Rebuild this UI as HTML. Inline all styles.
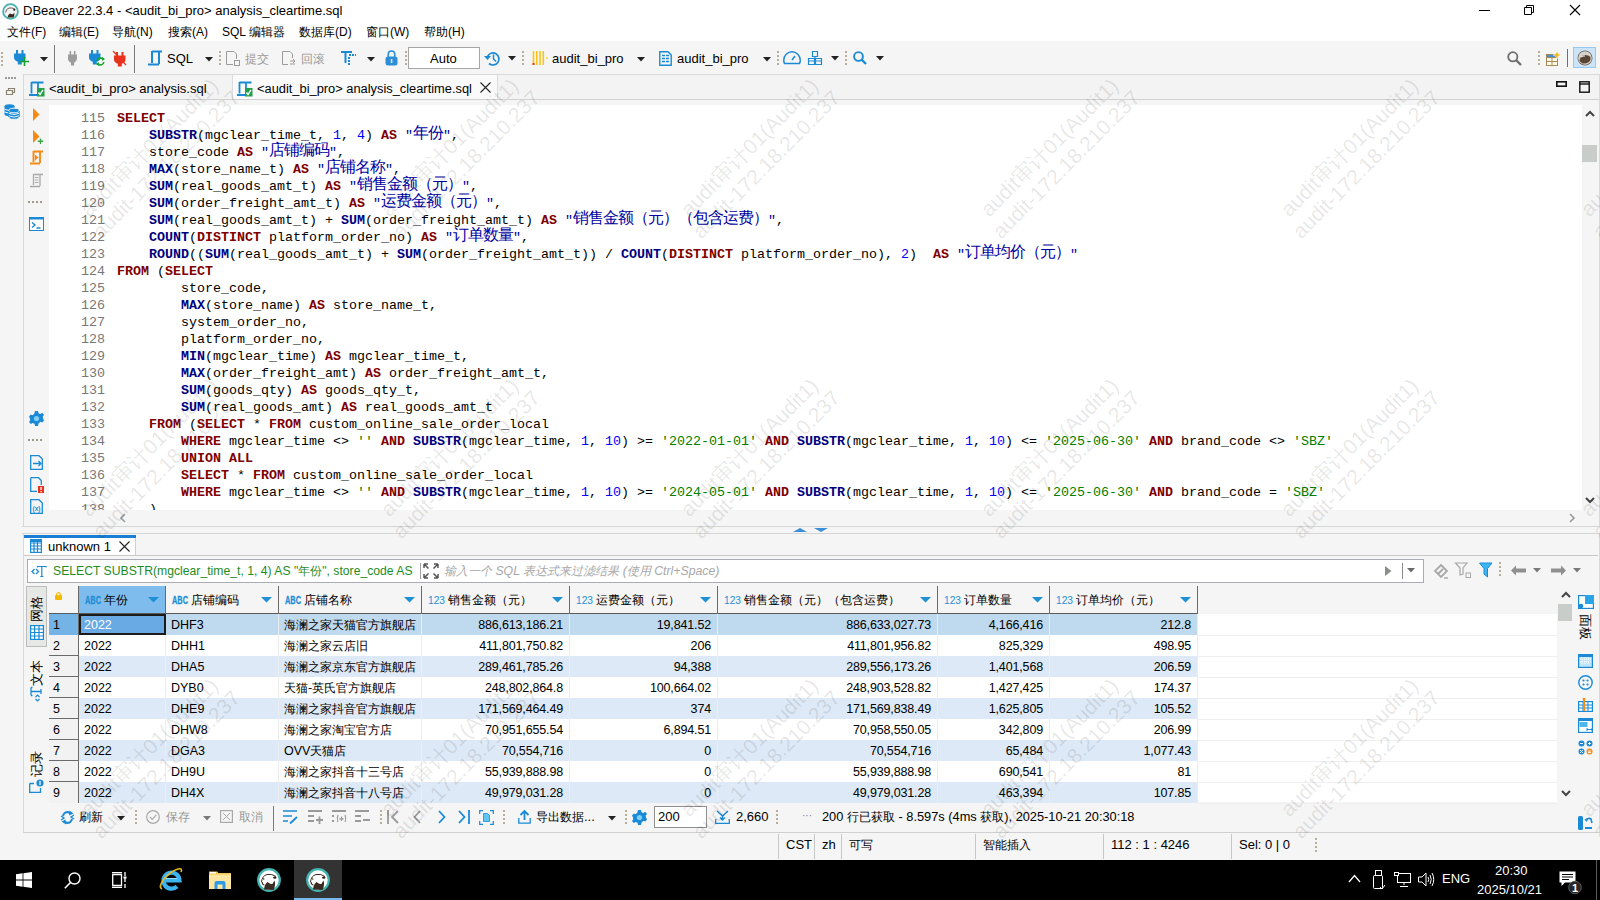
<!DOCTYPE html><html><head><meta charset="utf-8"><style>
*{box-sizing:border-box}
html,body{margin:0;padding:0;width:1600px;height:900px;overflow:hidden;background:#f5f5f5;font-family:"Liberation Sans",sans-serif;font-size:12px;color:#000}
.t{position:absolute;white-space:pre;line-height:16px}
.c{font-size:12px}
.code{position:absolute;left:49px;top:105px;width:1533px;height:405px;background:#fff;overflow:hidden}
.ln{position:absolute;left:0;width:56px;text-align:right;color:#787878;font:13.333px "Liberation Mono",monospace;line-height:17px}
.cl{position:absolute;left:68px;white-space:pre;font:13.333px "Liberation Mono",monospace;line-height:17px;color:#000}
.k{color:#800000;font-weight:bold}
.f{color:#000080;font-weight:bold}
.n{color:#0000ff}
.s{color:#008000}
.q{color:#0000a0}
.cj{font-family:"Liberation Sans",sans-serif;font-size:16px;letter-spacing:-1px;line-height:0;position:relative;top:-1px}
.wm{position:absolute;width:300px;height:48px;text-align:center;transform:rotate(-45deg);color:rgba(0,0,0,0.10);font-size:21px;line-height:24px;white-space:nowrap;pointer-events:none}
svg{position:absolute;overflow:visible}
</style></head><body>
<div style="position:absolute;left:0px;top:0px;width:1600px;height:41px;background:#fff"></div>
<div class="t" style="left:23px;top:3px;font-size:13px">DBeaver 22.3.4 - &lt;audit_bi_pro&gt; analysis_cleartime.sql</div>
<div class="t" style="left:7px;top:24px;font-size:12px"><span class="c">文件</span>(F)</div>
<div class="t" style="left:59px;top:24px;font-size:12px"><span class="c">编辑</span>(E)</div>
<div class="t" style="left:112px;top:24px;font-size:12px"><span class="c">导航</span>(N)</div>
<div class="t" style="left:168px;top:24px;font-size:12px"><span class="c">搜索</span>(A)</div>
<div class="t" style="left:222px;top:24px;font-size:12px">SQL <span class="c">编辑器</span></div>
<div class="t" style="left:299px;top:24px;font-size:12px"><span class="c">数据库</span>(D)</div>
<div class="t" style="left:366px;top:24px;font-size:12px"><span class="c">窗口</span>(W)</div>
<div class="t" style="left:424px;top:24px;font-size:12px"><span class="c">帮助</span>(H)</div>
<div style="position:absolute;left:0px;top:41px;width:1600px;height:33px;background:#f5f5f5"></div>
<svg style="left:2px;top:3px;" width="17" height="17" viewBox="0 0 17 17"><circle cx="8.5" cy="8.5" r="7.4" fill="#f4f4f4" stroke="#45b3b0" stroke-width="1.8"/><path d="M3.5 9.5Q4 6 7 5Q10 4.5 13 6" fill="none" stroke="#4a3a30" stroke-width="0.8"/><ellipse cx="12.3" cy="6.8" rx="1.2" ry="0.9" fill="#2a1d15"/><path d="M5.5 14.5Q6 11.5 8 10.5Q9.5 11.5 11 11.3Q12 10 12.3 9.5Q13 12 11.5 14.5Z" fill="#3b2a20"/></svg>
<svg style="left:1479px;top:10px;" width="11" height="1" viewBox="0 0 11 1"><rect width="11" height="1" fill="#000"/></svg>
<svg style="left:1524px;top:5px;" width="10" height="10" viewBox="0 0 10 10"><path d="M0.5 2.5H7.5V9.5H0.5Z M2.5 2.5V0.5H9.5V7.5H7.5" fill="none" stroke="#000" stroke-width="1"/></svg>
<svg style="left:1570px;top:5px;" width="10" height="10" viewBox="0 0 10 10"><path d="M0 0L10 10M10 0L0 10" stroke="#000" stroke-width="1.1"/></svg>
<div style="position:absolute;left:1px;top:52px;width:2px;height:2px;background:#b8ae98"></div><div style="position:absolute;left:1px;top:56px;width:2px;height:2px;background:#b8ae98"></div><div style="position:absolute;left:1px;top:60px;width:2px;height:2px;background:#b8ae98"></div><div style="position:absolute;left:1px;top:64px;width:2px;height:2px;background:#b8ae98"></div>
<svg style="left:14px;top:50px;" width="13" height="15" viewBox="0 0 13 15"><g transform="scale(1.0,1)"><path d="M2 0H4V3.5H7.5V0H9.5V3.5H11.5V7.5Q11.5 10.5 7.8 11.8V14.5H3.8V11.8Q0 10.5 0 7.5V3.5H2Z" fill="#1a8ad6"/></g></svg>
<svg style="left:20px;top:57px;" width="9" height="9" viewBox="0 0 9 9"><path d="M4.5 0V9M0 4.5H9" stroke="#11a52b" stroke-width="1.6"/></svg>
<svg style="left:40px;top:57px;" width="8" height="5" viewBox="0 0 8 5"><path d="M0 0H8L4 4.5Z" fill="#222"/></svg>
<div style="position:absolute;left:54px;top:45px;width:1px;height:28px;background:#7a7a7a"></div>
<svg style="left:68px;top:51px;" width="10" height="15" viewBox="0 0 10 15"><g transform="scale(0.78,1)"><path d="M2 0H4V3.5H7.5V0H9.5V3.5H11.5V7.5Q11.5 10.5 7.8 11.8V14.5H3.8V11.8Q0 10.5 0 7.5V3.5H2Z" fill="#9c9c9c"/></g></svg>
<svg style="left:89px;top:50px;" width="13" height="15" viewBox="0 0 13 15"><g transform="scale(1.0,1)"><path d="M2 0H4V3.5H7.5V0H9.5V3.5H11.5V7.5Q11.5 10.5 7.8 11.8V14.5H3.8V11.8Q0 10.5 0 7.5V3.5H2Z" fill="#1a8ad6"/></g></svg>
<svg style="left:96px;top:57px;" width="9" height="9" viewBox="0 0 9 9"><path d="M1 4Q2 1 5 1L8 2M8 5Q7 8 4 8L1 7" fill="none" stroke="#11a52b" stroke-width="1.4"/><path d="M6 0L9 2L6 4Z M3 5L0 7L3 9Z" fill="#11a52b"/></svg>
<svg style="left:114px;top:52px;" width="13" height="15" viewBox="0 0 13 15"><g transform="scale(1.0,1)"><path d="M2 0H4V3.5H7.5V0H9.5V3.5H11.5V7.5Q11.5 10.5 7.8 11.8V14.5H3.8V11.8Q0 10.5 0 7.5V3.5H2Z" fill="#e8321e"/></g></svg>
<svg style="left:113px;top:51px;" width="13" height="14" viewBox="0 0 13 14"><path d="M0 0L13 14" stroke="#e8321e" stroke-width="1.2"/></svg>
<div style="position:absolute;left:134px;top:45px;width:1px;height:28px;background:#7a7a7a"></div>
<svg style="left:147px;top:50px;" width="16" height="16" viewBox="0 0 16 16"><path d="M5 1.5H15 M5 1V13 M12 1.5V14 M1 14.5H12" stroke="#1a8ad6" stroke-width="2" fill="none"/></svg>
<div class="t" style="left:167px;top:51px;font-size:13px">SQL</div>
<svg style="left:205px;top:57px;" width="8" height="5" viewBox="0 0 8 5"><path d="M0 0H8L4 4.5Z" fill="#222"/></svg>
<div style="position:absolute;left:219px;top:51px;width:2px;height:2px;background:#b8ae98"></div><div style="position:absolute;left:219px;top:55px;width:2px;height:2px;background:#b8ae98"></div><div style="position:absolute;left:219px;top:59px;width:2px;height:2px;background:#b8ae98"></div><div style="position:absolute;left:219px;top:63px;width:2px;height:2px;background:#b8ae98"></div>
<svg style="left:226px;top:51px;" width="14" height="15" viewBox="0 0 14 15"><path d="M0.5 0.5H8L10.5 3V8 M0.5 0.5V13.5H7" fill="none" stroke="#9a9a9a" stroke-width="1"/><rect x="8.5" y="9.5" width="5" height="5" fill="none" stroke="#9a9a9a"/></svg>
<div class="t" style="left:245px;top:51px;font-size:12px;color:#9a9a9a"><span class="c">提交</span></div>
<svg style="left:282px;top:51px;" width="14" height="15" viewBox="0 0 14 15"><path d="M0.5 0.5H8L10.5 3V7 M0.5 0.5V13.5H6" fill="none" stroke="#9a9a9a" stroke-width="1"/><path d="M8 10H13M11 8L13 10L11 12M13 13H8" fill="none" stroke="#9a9a9a"/></svg>
<div class="t" style="left:301px;top:51px;font-size:12px;color:#9a9a9a"><span class="c">回滚</span></div>
<svg style="left:341px;top:51px;" width="16" height="16" viewBox="0 0 16 16"><path d="M0 1H11M4.5 1V12" stroke="#1a8ad6" stroke-width="2"/><path d="M8 4H10M11 4H13M14 4H15M8 6V8M8 9V11M8 12V14" stroke="#1a8ad6" stroke-width="2"/></svg>
<svg style="left:367px;top:57px;" width="8" height="5" viewBox="0 0 8 5"><path d="M0 0H8L4 4.5Z" fill="#222"/></svg>
<svg style="left:385px;top:50px;" width="13" height="16" viewBox="0 0 13 16"><path d="M3.2 7V4.5Q3.2 1 6.5 1Q9.8 1 9.8 4.5V7" fill="none" stroke="#2f8fd6" stroke-width="1.6"/><rect x="0.5" y="6.5" width="12" height="9" rx="2.5" fill="#2f8fd6"/><rect x="5.8" y="9" width="1.6" height="4" fill="#cfe6f7"/></svg>
<div style="position:absolute;left:405px;top:51px;width:2px;height:2px;background:#b8ae98"></div><div style="position:absolute;left:405px;top:55px;width:2px;height:2px;background:#b8ae98"></div><div style="position:absolute;left:405px;top:59px;width:2px;height:2px;background:#b8ae98"></div><div style="position:absolute;left:405px;top:63px;width:2px;height:2px;background:#b8ae98"></div>
<div style="position:absolute;left:408px;top:47px;width:72px;height:22px;background:#fff;border:1px solid #a6a6a6"></div>
<div class="t" style="left:430px;top:51px;font-size:13px">Auto</div>
<svg style="left:484px;top:50px;" width="17" height="17" viewBox="0 0 17 17"><path d="M3.5 6.5A6 6 0 1 1 5 13.5" fill="none" stroke="#1a8ad6" stroke-width="1.7"/><path d="M0 6H7L3.5 10Z" fill="#1a8ad6"/><path d="M9.5 4.5V9L12 11.5" fill="none" stroke="#1a8ad6" stroke-width="1.5"/></svg>
<svg style="left:508px;top:56px;" width="8" height="5" viewBox="0 0 8 5"><path d="M0 0H8L4 4.5Z" fill="#222"/></svg>
<div style="position:absolute;left:522px;top:51px;width:2px;height:2px;background:#b8ae98"></div><div style="position:absolute;left:522px;top:55px;width:2px;height:2px;background:#b8ae98"></div><div style="position:absolute;left:522px;top:59px;width:2px;height:2px;background:#b8ae98"></div><div style="position:absolute;left:522px;top:63px;width:2px;height:2px;background:#b8ae98"></div>
<svg style="left:532px;top:51px;" width="17" height="14" viewBox="0 0 17 14"><path d="M1.5 0V14M4.8 0V14M8 0V14M11.3 0V14" stroke="#fcc419" stroke-width="1.6"/><rect x="0.5" y="12" width="2" height="2" fill="#e8321e"/><circle cx="15" cy="7" r="1" fill="#fcdc19"/></svg>
<div class="t" style="left:552px;top:51px;font-size:13px">audit_bi_pro</div>
<svg style="left:637px;top:57px;" width="8" height="5" viewBox="0 0 8 5"><path d="M0 0H8L4 4.5Z" fill="#222"/></svg>
<svg style="left:659px;top:51px;" width="13" height="15" viewBox="0 0 13 15"><path d="M0.8 0.8H9L12.2 4V14.2H0.8Z" fill="none" stroke="#1a8ad6" stroke-width="1.4"/><path d="M3 4.5H6M7 4.5H10M3 7.5H6M7 7.5H10M3 10.5H6M7 10.5H10" stroke="#1a8ad6" stroke-width="1.3"/></svg>
<div class="t" style="left:677px;top:51px;font-size:13px">audit_bi_pro</div>
<svg style="left:763px;top:57px;" width="8" height="5" viewBox="0 0 8 5"><path d="M0 0H8L4 4.5Z" fill="#222"/></svg>
<div style="position:absolute;left:777px;top:51px;width:2px;height:2px;background:#b8ae98"></div><div style="position:absolute;left:777px;top:55px;width:2px;height:2px;background:#b8ae98"></div><div style="position:absolute;left:777px;top:59px;width:2px;height:2px;background:#b8ae98"></div><div style="position:absolute;left:777px;top:63px;width:2px;height:2px;background:#b8ae98"></div>
<svg style="left:783px;top:51px;" width="18" height="14" viewBox="0 0 18 14"><path d="M1.5 12.5Q0.5 11 0.8 9A8.2 8.2 0 0 1 17.2 9Q17.5 11 16.5 12.5Z" fill="none" stroke="#1a8ad6" stroke-width="1.5"/><path d="M9 9L12 5" stroke="#1a8ad6" stroke-width="1.6"/></svg>
<svg style="left:808px;top:51px;" width="14" height="14" viewBox="0 0 14 14"><path d="M4.5 0.5H9.5V5.5H4.5Z M0.5 7.5H6.5V13.5H0.5Z M7.5 7.5H13.5V13.5H7.5Z M7 5.5V7.5M0.5 10H13.5" fill="none" stroke="#1a8ad6" stroke-width="1.2"/></svg>
<svg style="left:831px;top:56px;" width="8" height="5" viewBox="0 0 8 5"><path d="M0 0H8L4 4.5Z" fill="#222"/></svg>
<div style="position:absolute;left:845px;top:51px;width:2px;height:2px;background:#b8ae98"></div><div style="position:absolute;left:845px;top:55px;width:2px;height:2px;background:#b8ae98"></div><div style="position:absolute;left:845px;top:59px;width:2px;height:2px;background:#b8ae98"></div><div style="position:absolute;left:845px;top:63px;width:2px;height:2px;background:#b8ae98"></div>
<svg style="left:853px;top:51px;" width="14" height="15" viewBox="0 0 14 15"><circle cx="5.5" cy="5.5" r="4.4" fill="none" stroke="#1a8ad6" stroke-width="1.9"/><path d="M8.5 8.5L13 13" stroke="#1a8ad6" stroke-width="2.4"/></svg>
<svg style="left:876px;top:56px;" width="8" height="5" viewBox="0 0 8 5"><path d="M0 0H8L4 4.5Z" fill="#222"/></svg>
<svg style="left:1507px;top:51px;" width="15" height="15" viewBox="0 0 15 15"><circle cx="5.8" cy="5.8" r="4.6" fill="none" stroke="#6e6e6e" stroke-width="1.8"/><path d="M9 9L14 14" stroke="#6e6e6e" stroke-width="2.4"/></svg>
<div style="position:absolute;left:1538px;top:51px;width:2px;height:2px;background:#b8ae98"></div><div style="position:absolute;left:1538px;top:55px;width:2px;height:2px;background:#b8ae98"></div><div style="position:absolute;left:1538px;top:59px;width:2px;height:2px;background:#b8ae98"></div><div style="position:absolute;left:1538px;top:63px;width:2px;height:2px;background:#b8ae98"></div>
<svg style="left:1546px;top:51px;" width="15" height="15" viewBox="0 0 15 15"><rect x="0.5" y="3.5" width="11" height="11" fill="#fffbe8" stroke="#a58a55"/><path d="M0.5 6.5H11.5M6 6.5V14.5M0.5 10.5H11.5" stroke="#a58a55"/><rect x="1" y="4" width="10" height="2" fill="#3d8fd8"/><path d="M11 0L12.2 2.8L15 4L12.2 5.2L11 8L9.8 5.2L7 4L9.8 2.8Z" fill="#f0b820" stroke="#fff" stroke-width="0.5"/></svg>
<div style="position:absolute;left:1567px;top:49px;width:1px;height:18px;background:#6f6f6f"></div>
<div style="position:absolute;left:1573px;top:47px;width:23px;height:21px;background:#cce4f7;border:1px solid #99c9ef"></div>
<svg style="left:1577px;top:50px;" width="16" height="16" viewBox="0 0 16 16"><circle cx="8" cy="8" r="7.5" fill="#6a5a50"/><circle cx="8" cy="8" r="6.8" fill="#d8d2cc"/><path d="M2.5 11Q3 6 7 5Q11 4.5 13.5 7Q14 10 12 12Q9 14 5.5 13.5Z" fill="#5a4436"/><path d="M4 7Q6 5.5 8 6" stroke="#fff" stroke-width="1" fill="none"/></svg>
<div style="position:absolute;left:23px;top:74px;width:1577px;height:26px;background:#f3f3f3;border:1px solid #d9d9d9;border-bottom:1px solid #d0d0d0"></div>
<div style="position:absolute;left:232px;top:75px;width:266px;height:24px;background:#fafafa;border-left:1px solid #dcdcdc;border-right:1px solid #dcdcdc"></div>
<div class="t" style="left:49px;top:81px;font-size:13px">&lt;audit_bi_pro&gt; analysis.sql</div>
<div class="t" style="left:257px;top:81px;font-size:12.85px">&lt;audit_bi_pro&gt; analysis_cleartime.sql</div>
<div style="position:absolute;left:23px;top:100px;width:1577px;height:426px;background:#f5f5f5;border-left:1px solid #d9d9d9;border-right:1px solid #d9d9d9"></div>
<div class="code">
<div class="ln" style="top:5px">115</div>
<div class="cl" style="top:5px"><span class="k">SELECT</span></div>
<div class="ln" style="top:22px">116</div>
<div class="cl" style="top:22px">    <span class="f">SUBSTR</span>(mgclear_time_t, <span class="n">1</span>, <span class="n">4</span>) <span class="k">AS</span> <span class="q">&quot;<span class="cj">年份</span>&quot;</span>,</div>
<div class="ln" style="top:39px">117</div>
<div class="cl" style="top:39px">    store_code <span class="k">AS</span> <span class="q">&quot;<span class="cj">店铺编码</span>&quot;</span>,</div>
<div class="ln" style="top:56px">118</div>
<div class="cl" style="top:56px">    <span class="f">MAX</span>(store_name_t) <span class="k">AS</span> <span class="q">&quot;<span class="cj">店铺名称</span>&quot;</span>,</div>
<div class="ln" style="top:73px">119</div>
<div class="cl" style="top:73px">    <span class="f">SUM</span>(real_goods_amt_t) <span class="k">AS</span> <span class="q">&quot;<span class="cj">销售金额（元）</span>&quot;</span>,</div>
<div class="ln" style="top:90px">120</div>
<div class="cl" style="top:90px">    <span class="f">SUM</span>(order_freight_amt_t) <span class="k">AS</span> <span class="q">&quot;<span class="cj">运费金额（元）</span>&quot;</span>,</div>
<div class="ln" style="top:107px">121</div>
<div class="cl" style="top:107px">    <span class="f">SUM</span>(real_goods_amt_t) + <span class="f">SUM</span>(order_freight_amt_t) <span class="k">AS</span> <span class="q">&quot;<span class="cj">销售金额（元）（包含运费）</span>&quot;</span>,</div>
<div class="ln" style="top:124px">122</div>
<div class="cl" style="top:124px">    <span class="f">COUNT</span>(<span class="k">DISTINCT</span> platform_order_no) <span class="k">AS</span> <span class="q">&quot;<span class="cj">订单数量</span>&quot;</span>,</div>
<div class="ln" style="top:141px">123</div>
<div class="cl" style="top:141px">    <span class="f">ROUND</span>((<span class="f">SUM</span>(real_goods_amt_t) + <span class="f">SUM</span>(order_freight_amt_t)) / <span class="f">COUNT</span>(<span class="k">DISTINCT</span> platform_order_no), <span class="n">2</span>)  <span class="k">AS</span> <span class="q">&quot;<span class="cj">订单均价（元）</span>&quot;</span></div>
<div class="ln" style="top:158px">124</div>
<div class="cl" style="top:158px"><span class="k">FROM</span> (<span class="k">SELECT</span></div>
<div class="ln" style="top:175px">125</div>
<div class="cl" style="top:175px">        store_code,</div>
<div class="ln" style="top:192px">126</div>
<div class="cl" style="top:192px">        <span class="f">MAX</span>(store_name) <span class="k">AS</span> store_name_t,</div>
<div class="ln" style="top:209px">127</div>
<div class="cl" style="top:209px">        system_order_no,</div>
<div class="ln" style="top:226px">128</div>
<div class="cl" style="top:226px">        platform_order_no,</div>
<div class="ln" style="top:243px">129</div>
<div class="cl" style="top:243px">        <span class="f">MIN</span>(mgclear_time) <span class="k">AS</span> mgclear_time_t,</div>
<div class="ln" style="top:260px">130</div>
<div class="cl" style="top:260px">        <span class="f">MAX</span>(order_freight_amt) <span class="k">AS</span> order_freight_amt_t,</div>
<div class="ln" style="top:277px">131</div>
<div class="cl" style="top:277px">        <span class="f">SUM</span>(goods_qty) <span class="k">AS</span> goods_qty_t,</div>
<div class="ln" style="top:294px">132</div>
<div class="cl" style="top:294px">        <span class="f">SUM</span>(real_goods_amt) <span class="k">AS</span> real_goods_amt_t</div>
<div class="ln" style="top:311px">133</div>
<div class="cl" style="top:311px">    <span class="k">FROM</span> (<span class="k">SELECT</span> * <span class="k">FROM</span> custom_online_sale_order_local</div>
<div class="ln" style="top:328px">134</div>
<div class="cl" style="top:328px">        <span class="k">WHERE</span> mgclear_time &lt;&gt; <span class="s">&#x27;&#x27;</span> <span class="k">AND</span> <span class="f">SUBSTR</span>(mgclear_time, <span class="n">1</span>, <span class="n">10</span>) &gt;= <span class="s">&#x27;2022-01-01&#x27;</span> <span class="k">AND</span> <span class="f">SUBSTR</span>(mgclear_time, <span class="n">1</span>, <span class="n">10</span>) &lt;= <span class="s">&#x27;2025-06-30&#x27;</span> <span class="k">AND</span> brand_code &lt;&gt; <span class="s">&#x27;SBZ&#x27;</span></div>
<div class="ln" style="top:345px">135</div>
<div class="cl" style="top:345px">        <span class="k">UNION</span> <span class="k">ALL</span></div>
<div class="ln" style="top:362px">136</div>
<div class="cl" style="top:362px">        <span class="k">SELECT</span> * <span class="k">FROM</span> custom_online_sale_order_local</div>
<div class="ln" style="top:379px">137</div>
<div class="cl" style="top:379px">        <span class="k">WHERE</span> mgclear_time &lt;&gt; <span class="s">&#x27;&#x27;</span> <span class="k">AND</span> <span class="f">SUBSTR</span>(mgclear_time, <span class="n">1</span>, <span class="n">10</span>) &gt;= <span class="s">&#x27;2024-05-01&#x27;</span> <span class="k">AND</span> <span class="f">SUBSTR</span>(mgclear_time, <span class="n">1</span>, <span class="n">10</span>) &lt;= <span class="s">&#x27;2025-06-30&#x27;</span> <span class="k">AND</span> brand_code = <span class="s">&#x27;SBZ&#x27;</span></div>
<div class="ln" style="top:396px">138</div>
<div class="cl" style="top:396px">    )</div>
</div>
<div style="position:absolute;left:49px;top:510px;width:1533px;height:16px;background:#f5f5f5"></div>
<svg style="left:120px;top:513px;" width="6" height="10" viewBox="0 0 6 10"><path d="M5 1L1 5L5 9" fill="none" stroke="#9a9a9a" stroke-width="1.6"/></svg>
<svg style="left:1569px;top:513px;" width="6" height="10" viewBox="0 0 6 10"><path d="M1 1L5 5L1 9" fill="none" stroke="#9a9a9a" stroke-width="1.6"/></svg>
<div style="position:absolute;left:1582px;top:105px;width:16px;height:405px;background:#f5f5f5"></div>
<div style="position:absolute;left:1582px;top:145px;width:15px;height:17px;background:#c9cdc9"></div>
<div style="position:absolute;left:22px;top:526px;width:1578px;height:1px;background:#d5d5d5"></div>
<div style="position:absolute;left:22px;top:533px;width:1578px;height:1px;background:#d5d5d5"></div>
<div style="position:absolute;left:5px;top:77px;width:2px;height:2px;background:#9a9a9a"></div><div style="position:absolute;left:8px;top:77px;width:2px;height:2px;background:#9a9a9a"></div><div style="position:absolute;left:11px;top:77px;width:2px;height:2px;background:#9a9a9a"></div><div style="position:absolute;left:14px;top:77px;width:2px;height:2px;background:#9a9a9a"></div>
<svg style="left:6px;top:86px;" width="10" height="9" viewBox="0 0 10 9"><path d="M0.5 4.5H6.5V8.5H0.5Z M2.5 4.5V2.5H8.5V6.5H6.5" fill="none" stroke="#8a8170" stroke-width="1.2"/></svg>
<svg style="left:4px;top:104px;" width="16" height="16" viewBox="0 0 16 16"><g fill="#1a8ad6"><ellipse cx="5.5" cy="2.5" rx="5" ry="2.2"/><rect x="0.5" y="2.5" width="10" height="7.5"/><ellipse cx="5.5" cy="10" rx="5" ry="2.2"/></g><path d="M0.5 5.3Q5.5 7.8 10.5 5.3M0.5 8Q5.5 10.5 10.5 8" stroke="#fff" stroke-width="0.9" fill="none"/><g fill="#1a8ad6" stroke="#f5f5f5" stroke-width="1"><ellipse cx="10" cy="13" rx="5.2" ry="2.3"/><rect x="4.8" y="6.5" width="10.4" height="6.5" stroke="none"/><ellipse cx="10" cy="6.5" rx="5.2" ry="2.3"/></g><path d="M4.8 7V13M15.2 7V13" stroke="#1a8ad6" stroke-width="1"/><path d="M4.8 9.3Q10 11.8 15.2 9.3M4.8 11.8Q10 14.3 15.2 11.8" stroke="#fff" stroke-width="0.9" fill="none"/></svg>
<svg style="left:29px;top:81px;" width="16" height="16" viewBox="0 0 16 16"><path d="M2.5 1.5H14.5 M2.5 1V12.5 M9 1.5V9 M0 14H9" stroke="#1a8ad6" stroke-width="1.8" fill="none"/><rect x="8" y="7" width="7.5" height="8.5" fill="#21a04a"/><path d="M9.5 11.5L11 13.5L14 8.8" fill="none" stroke="#fff" stroke-width="1.3"/></svg>
<svg style="left:237px;top:81px;" width="16" height="16" viewBox="0 0 16 16"><path d="M2.5 1.5H14.5 M2.5 1V12.5 M9 1.5V9 M0 14H9" stroke="#1a8ad6" stroke-width="1.8" fill="none"/><rect x="8" y="7" width="7.5" height="8.5" fill="#21a04a"/><path d="M9.5 11.5L11 13.5L14 8.8" fill="none" stroke="#fff" stroke-width="1.3"/></svg>
<svg style="left:480px;top:82px;" width="11" height="11" viewBox="0 0 11 11"><path d="M0.5 0.5L10.5 10.5M10.5 0.5L0.5 10.5" stroke="#222" stroke-width="1.1"/></svg>
<svg style="left:1556px;top:81px;" width="11" height="6" viewBox="0 0 11 6"><rect x="0.8" y="0.8" width="9.4" height="4.4" fill="none" stroke="#111" stroke-width="1.6"/></svg>
<svg style="left:1579px;top:81px;" width="11" height="12" viewBox="0 0 11 12"><rect x="0.8" y="0.8" width="9.4" height="10.4" fill="none" stroke="#111" stroke-width="1.4"/><path d="M0.8 3H10.2" stroke="#111" stroke-width="1.4"/></svg>
<svg style="left:33px;top:108px;" width="7" height="13" viewBox="0 0 7 13"><path d="M0 0L6.5 6.5L0 13Z" fill="#f68a12"/></svg>
<svg style="left:33px;top:130px;" width="11" height="14" viewBox="0 0 11 14"><path d="M0 0L6.5 6.5L0 13Z" fill="#f68a12"/><path d="M7.5 8.5V14M4.8 11.3H10.2" stroke="#3aa64a" stroke-width="1.4"/></svg>
<svg style="left:29px;top:150px;" width="15" height="16" viewBox="0 0 15 16"><path d="M4.5 1.5H14 M4.5 1V12 M11 1.5V13 M1 13.5H11" stroke="#f68a12" stroke-width="1.9" fill="none"/><path d="M6 4.5L9.5 7.5L6 10.5Z" fill="#f68a12"/></svg>
<svg style="left:29px;top:173px;" width="15" height="15" viewBox="0 0 15 15"><path d="M4.5 1.5H14 M4.5 1V12 M11 1.5V13 M1 13.5H11" stroke="#a8a8a8" stroke-width="1.3" fill="none"/><path d="M6 4.5H9.5M6 7H9.5M6 9.5H9.5" stroke="#a8a8a8" stroke-width="1"/></svg>
<div style="position:absolute;left:28px;top:201px;width:2px;height:2px;background:#a09a88"></div><div style="position:absolute;left:32px;top:201px;width:2px;height:2px;background:#a09a88"></div><div style="position:absolute;left:36px;top:201px;width:2px;height:2px;background:#a09a88"></div><div style="position:absolute;left:40px;top:201px;width:2px;height:2px;background:#a09a88"></div>
<svg style="left:29px;top:217px;" width="15" height="14" viewBox="0 0 15 14"><rect x="0.5" y="0.5" width="14" height="13" fill="#fff" stroke="#1a8ad6"/><rect x="0" y="0" width="15" height="2.5" fill="#1a8ad6"/><path d="M3 5.5L6 8L3 10.5M7.5 11H11.5" fill="none" stroke="#1a8ad6" stroke-width="1.4"/></svg>
<svg style="left:29px;top:411px;" width="15" height="15" viewBox="0 0 15 15"><path d="M6 0H9L9.5 2.2L11.3 3L13.2 1.8L15 4L13.7 5.8L14 7.5L15 9.5L13.3 11.5L11.4 10.8L9.6 12.6L9 15H6L5.6 12.8L3.7 11.9L1.8 13L0 11L1.2 9.2L1 7.5L0 5.5L1.8 3.5L3.6 4.2L5.4 2.4Z" fill="#1a8ad6"/><circle cx="7.5" cy="7.5" r="2.6" fill="#7fd0f4"/></svg>
<div style="position:absolute;left:28px;top:439px;width:2px;height:2px;background:#a09a88"></div><div style="position:absolute;left:32px;top:439px;width:2px;height:2px;background:#a09a88"></div><div style="position:absolute;left:36px;top:439px;width:2px;height:2px;background:#a09a88"></div><div style="position:absolute;left:40px;top:439px;width:2px;height:2px;background:#a09a88"></div>
<svg style="left:30px;top:455px;" width="13" height="15" viewBox="0 0 13 15"><path d="M0.7 0.7H9L12.3 4V14.3H0.7Z" fill="none" stroke="#1a8ad6" stroke-width="1.3"/><path d="M3 8.5H11M8.5 6L11 8.5L8.5 11" fill="none" stroke="#1a8ad6" stroke-width="1.3"/></svg>
<svg style="left:30px;top:477px;" width="14" height="16" viewBox="0 0 14 16"><path d="M0.7 0.7H8.5L11.3 3.5V8 M0.7 0.7V14.3H7" fill="none" stroke="#1a8ad6" stroke-width="1.3"/><rect x="8" y="9" width="6" height="7" fill="#e8321e"/><rect x="10.4" y="10" width="1.3" height="3" fill="#fff"/><rect x="10.4" y="14" width="1.3" height="1.2" fill="#fff"/></svg>
<svg style="left:30px;top:499px;" width="13" height="15" viewBox="0 0 13 15"><path d="M0.7 0.7H9L12.3 4V14.3H0.7Z" fill="none" stroke="#1a8ad6" stroke-width="1.3"/><text x="6.5" y="11.5" font-size="6.5" text-anchor="middle" fill="#1a8ad6" font-family="Liberation Sans" font-weight="bold">(x)</text></svg>
<svg style="left:1585px;top:111px;" width="10" height="6" viewBox="0 0 10 6"><path d="M1 5L5 1L9 5" fill="none" stroke="#444" stroke-width="2"/></svg>
<svg style="left:1585px;top:497px;" width="10" height="6" viewBox="0 0 10 6"><path d="M1 1L5 5L9 1" fill="none" stroke="#444" stroke-width="2"/></svg>
<svg style="left:793px;top:528px;" width="14" height="4" viewBox="0 0 14 4"><path d="M0 4L7 0L14 4Z" fill="#3b8fd6"/></svg>
<svg style="left:814px;top:528px;" width="14" height="4" viewBox="0 0 14 4"><path d="M0 0H14L7 4Z" fill="#3b8fd6"/></svg>
<div style="position:absolute;left:23px;top:534px;width:1577px;height:299px;background:#f5f5f5;border-left:1px solid #d9d9d9;border-right:1px solid #d9d9d9;border-bottom:1px solid #d0d0d0"></div>
<div style="position:absolute;left:24px;top:555px;width:1574px;height:1px;background:#c8c8c8"></div>
<div style="position:absolute;left:24px;top:535px;width:112px;height:20px;background:#fff;border-right:1px solid #d0d0d0"></div>
<div style="position:absolute;left:24px;top:535px;width:112px;height:3px;background:#1a7dd4"></div>
<div class="t" style="left:48px;top:539px;font-size:13px">unknown 1</div>
<div style="position:absolute;left:27px;top:559px;width:1397px;height:24px;background:#fff;border:1px solid #a9adb1"></div>
<div class="t" style="left:53px;top:563px;font-size:12.2px;color:#1e8c1e">SELECT SUBSTR(mgclear_time_t, 1, 4) AS &quot;<span class="c">年份</span>&quot;, store_code AS</div>
<div style="position:absolute;left:420px;top:563px;width:1px;height:16px;background:#a0a0a0"></div>
<div class="t" style="left:444px;top:563px;font-size:12.3px;color:#a8a8a8;font-style:italic"><span class="c">输入一个</span> SQL <span class="c">表达式来过滤结果</span> (<span class="c">使用</span> Ctrl+Space)</div>
<div style="position:absolute;left:49px;top:586px;width:1508px;height:216px;background:#fff"></div>
<div style="position:absolute;left:1198px;top:586px;width:359px;height:28px;background:#f5f5f5"></div>
<div style="position:absolute;left:49px;top:586px;width:1149px;height:28px;background:#f5f5f5;border-bottom:1px solid #5a5a5a"></div>
<div style="position:absolute;left:79px;top:586px;width:87px;height:28px;background:#7ebcee;border-bottom:1px solid #5a5a5a"></div>
<div style="position:absolute;left:78px;top:586px;width:1px;height:28px;background:#6a6a6a"></div>
<svg style="left:85px;top:596px;" width="16" height="8" viewBox="0 0 16 8"><text x="0" y="7.5" font-size="10.5" font-weight="bold" fill="#1f8fd6" font-family="Liberation Sans" textLength="16" lengthAdjust="spacingAndGlyphs" stroke="#1f8fd6" stroke-width="0.3">ABC</text></svg>
<div class="t" style="left:104px;top:592px;font-size:12px"><span class="c">年份</span></div>
<svg style="left:148px;top:597px;" width="11" height="6" viewBox="0 0 11 6"><path d="M0 0H11L5.5 5.5Z" fill="#1f8fd6"/></svg>
<div style="position:absolute;left:165px;top:586px;width:1px;height:28px;background:#6a6a6a"></div>
<svg style="left:172px;top:596px;" width="16" height="8" viewBox="0 0 16 8"><text x="0" y="7.5" font-size="10.5" font-weight="bold" fill="#1f8fd6" font-family="Liberation Sans" textLength="16" lengthAdjust="spacingAndGlyphs" stroke="#1f8fd6" stroke-width="0.3">ABC</text></svg>
<div class="t" style="left:191px;top:592px;font-size:12px"><span class="c">店铺编码</span></div>
<svg style="left:261px;top:597px;" width="11" height="6" viewBox="0 0 11 6"><path d="M0 0H11L5.5 5.5Z" fill="#1f8fd6"/></svg>
<div style="position:absolute;left:278px;top:586px;width:1px;height:28px;background:#6a6a6a"></div>
<svg style="left:285px;top:596px;" width="16" height="8" viewBox="0 0 16 8"><text x="0" y="7.5" font-size="10.5" font-weight="bold" fill="#1f8fd6" font-family="Liberation Sans" textLength="16" lengthAdjust="spacingAndGlyphs" stroke="#1f8fd6" stroke-width="0.3">ABC</text></svg>
<div class="t" style="left:304px;top:592px;font-size:12px"><span class="c">店铺名称</span></div>
<svg style="left:404px;top:597px;" width="11" height="6" viewBox="0 0 11 6"><path d="M0 0H11L5.5 5.5Z" fill="#1f8fd6"/></svg>
<div style="position:absolute;left:421px;top:586px;width:1px;height:28px;background:#6a6a6a"></div>
<svg style="left:428px;top:595px;" width="17" height="9" viewBox="0 0 17 9"><text x="0" y="8.5" font-size="11" fill="#1f8fd6" font-family="Liberation Sans" textLength="17" lengthAdjust="spacingAndGlyphs">123</text></svg>
<div class="t" style="left:448px;top:592px;font-size:12px"><span class="c">销售金额（元）</span></div>
<svg style="left:552px;top:597px;" width="11" height="6" viewBox="0 0 11 6"><path d="M0 0H11L5.5 5.5Z" fill="#1f8fd6"/></svg>
<div style="position:absolute;left:569px;top:586px;width:1px;height:28px;background:#6a6a6a"></div>
<svg style="left:576px;top:595px;" width="17" height="9" viewBox="0 0 17 9"><text x="0" y="8.5" font-size="11" fill="#1f8fd6" font-family="Liberation Sans" textLength="17" lengthAdjust="spacingAndGlyphs">123</text></svg>
<div class="t" style="left:596px;top:592px;font-size:12px"><span class="c">运费金额（元）</span></div>
<svg style="left:700px;top:597px;" width="11" height="6" viewBox="0 0 11 6"><path d="M0 0H11L5.5 5.5Z" fill="#1f8fd6"/></svg>
<div style="position:absolute;left:717px;top:586px;width:1px;height:28px;background:#6a6a6a"></div>
<svg style="left:724px;top:595px;" width="17" height="9" viewBox="0 0 17 9"><text x="0" y="8.5" font-size="11" fill="#1f8fd6" font-family="Liberation Sans" textLength="17" lengthAdjust="spacingAndGlyphs">123</text></svg>
<div class="t" style="left:744px;top:592px;font-size:12px"><span class="c">销售金额（元）（包含运费）</span></div>
<svg style="left:920px;top:597px;" width="11" height="6" viewBox="0 0 11 6"><path d="M0 0H11L5.5 5.5Z" fill="#1f8fd6"/></svg>
<div style="position:absolute;left:937px;top:586px;width:1px;height:28px;background:#6a6a6a"></div>
<svg style="left:944px;top:595px;" width="17" height="9" viewBox="0 0 17 9"><text x="0" y="8.5" font-size="11" fill="#1f8fd6" font-family="Liberation Sans" textLength="17" lengthAdjust="spacingAndGlyphs">123</text></svg>
<div class="t" style="left:964px;top:592px;font-size:12px"><span class="c">订单数量</span></div>
<svg style="left:1032px;top:597px;" width="11" height="6" viewBox="0 0 11 6"><path d="M0 0H11L5.5 5.5Z" fill="#1f8fd6"/></svg>
<div style="position:absolute;left:1049px;top:586px;width:1px;height:28px;background:#6a6a6a"></div>
<svg style="left:1056px;top:595px;" width="17" height="9" viewBox="0 0 17 9"><text x="0" y="8.5" font-size="11" fill="#1f8fd6" font-family="Liberation Sans" textLength="17" lengthAdjust="spacingAndGlyphs">123</text></svg>
<div class="t" style="left:1076px;top:592px;font-size:12px"><span class="c">订单均价（元）</span></div>
<svg style="left:1180px;top:597px;" width="11" height="6" viewBox="0 0 11 6"><path d="M0 0H11L5.5 5.5Z" fill="#1f8fd6"/></svg>
<div style="position:absolute;left:1197px;top:586px;width:1px;height:28px;background:#6a6a6a"></div>
<div style="position:absolute;left:79px;top:614px;width:1119px;height:21px;background:#bfd9ef"></div>
<div style="position:absolute;left:49px;top:614px;width:29px;height:21px;background:#73b3e6"></div>
<div style="position:absolute;left:78px;top:614px;width:1px;height:21px;background:#6a6a6a"></div>
<div style="position:absolute;left:1198px;top:635px;width:359px;height:1px;background:#efefef"></div>
<div class="t" style="left:53px;top:617px;font-size:12.5px">1</div>
<div class="t" style="left:84px;top:617px;font-size:12.5px;color:#fff">2022</div>
<div style="position:absolute;left:165px;top:614px;width:1px;height:21px;background:#e9eef3"></div>
<div class="t" style="left:171px;top:617px;font-size:12.5px;color:#000">DHF3</div>
<div style="position:absolute;left:278px;top:614px;width:1px;height:21px;background:#e9eef3"></div>
<div class="t" style="left:284px;top:617px;font-size:12.5px;color:#000"><span class="c">海澜之家天猫官方旗舰店</span></div>
<div style="position:absolute;left:421px;top:614px;width:1px;height:21px;background:#e9eef3"></div>
<div class="t" style="left:422px;top:617px;width:141px;text-align:right;font-size:12.5px;letter-spacing:-0.15px">886,613,186.21</div>
<div style="position:absolute;left:569px;top:614px;width:1px;height:21px;background:#e9eef3"></div>
<div class="t" style="left:570px;top:617px;width:141px;text-align:right;font-size:12.5px;letter-spacing:-0.15px">19,841.52</div>
<div style="position:absolute;left:717px;top:614px;width:1px;height:21px;background:#e9eef3"></div>
<div class="t" style="left:718px;top:617px;width:213px;text-align:right;font-size:12.5px;letter-spacing:-0.15px">886,633,027.73</div>
<div style="position:absolute;left:937px;top:614px;width:1px;height:21px;background:#e9eef3"></div>
<div class="t" style="left:938px;top:617px;width:105px;text-align:right;font-size:12.5px;letter-spacing:-0.15px">4,166,416</div>
<div style="position:absolute;left:1049px;top:614px;width:1px;height:21px;background:#e9eef3"></div>
<div class="t" style="left:1050px;top:617px;width:141px;text-align:right;font-size:12.5px;letter-spacing:-0.15px">212.8</div>
<div style="position:absolute;left:79px;top:635px;width:1119px;height:21px;background:#fff"></div>
<div style="position:absolute;left:49px;top:635px;width:29px;height:21px;background:#f2f2f2"></div>
<div style="position:absolute;left:49px;top:655px;width:29px;height:1px;background:#6a6a6a"></div>
<div style="position:absolute;left:78px;top:635px;width:1px;height:21px;background:#6a6a6a"></div>
<div style="position:absolute;left:1198px;top:656px;width:359px;height:1px;background:#efefef"></div>
<div class="t" style="left:53px;top:638px;font-size:12.5px">2</div>
<div class="t" style="left:84px;top:638px;font-size:12.5px;color:#000">2022</div>
<div style="position:absolute;left:165px;top:635px;width:1px;height:21px;background:#ececec"></div>
<div class="t" style="left:171px;top:638px;font-size:12.5px;color:#000">DHH1</div>
<div style="position:absolute;left:278px;top:635px;width:1px;height:21px;background:#ececec"></div>
<div class="t" style="left:284px;top:638px;font-size:12.5px;color:#000"><span class="c">海澜之家云店旧</span></div>
<div style="position:absolute;left:421px;top:635px;width:1px;height:21px;background:#ececec"></div>
<div class="t" style="left:422px;top:638px;width:141px;text-align:right;font-size:12.5px;letter-spacing:-0.15px">411,801,750.82</div>
<div style="position:absolute;left:569px;top:635px;width:1px;height:21px;background:#ececec"></div>
<div class="t" style="left:570px;top:638px;width:141px;text-align:right;font-size:12.5px;letter-spacing:-0.15px">206</div>
<div style="position:absolute;left:717px;top:635px;width:1px;height:21px;background:#ececec"></div>
<div class="t" style="left:718px;top:638px;width:213px;text-align:right;font-size:12.5px;letter-spacing:-0.15px">411,801,956.82</div>
<div style="position:absolute;left:937px;top:635px;width:1px;height:21px;background:#ececec"></div>
<div class="t" style="left:938px;top:638px;width:105px;text-align:right;font-size:12.5px;letter-spacing:-0.15px">825,329</div>
<div style="position:absolute;left:1049px;top:635px;width:1px;height:21px;background:#ececec"></div>
<div class="t" style="left:1050px;top:638px;width:141px;text-align:right;font-size:12.5px;letter-spacing:-0.15px">498.95</div>
<div style="position:absolute;left:79px;top:656px;width:1119px;height:21px;background:#dde9f6"></div>
<div style="position:absolute;left:49px;top:656px;width:29px;height:21px;background:#f2f2f2"></div>
<div style="position:absolute;left:49px;top:676px;width:29px;height:1px;background:#6a6a6a"></div>
<div style="position:absolute;left:78px;top:656px;width:1px;height:21px;background:#6a6a6a"></div>
<div style="position:absolute;left:1198px;top:677px;width:359px;height:1px;background:#efefef"></div>
<div class="t" style="left:53px;top:659px;font-size:12.5px">3</div>
<div class="t" style="left:84px;top:659px;font-size:12.5px;color:#000">2022</div>
<div style="position:absolute;left:165px;top:656px;width:1px;height:21px;background:#e9eef3"></div>
<div class="t" style="left:171px;top:659px;font-size:12.5px;color:#000">DHA5</div>
<div style="position:absolute;left:278px;top:656px;width:1px;height:21px;background:#e9eef3"></div>
<div class="t" style="left:284px;top:659px;font-size:12.5px;color:#000"><span class="c">海澜之家京东官方旗舰店</span></div>
<div style="position:absolute;left:421px;top:656px;width:1px;height:21px;background:#e9eef3"></div>
<div class="t" style="left:422px;top:659px;width:141px;text-align:right;font-size:12.5px;letter-spacing:-0.15px">289,461,785.26</div>
<div style="position:absolute;left:569px;top:656px;width:1px;height:21px;background:#e9eef3"></div>
<div class="t" style="left:570px;top:659px;width:141px;text-align:right;font-size:12.5px;letter-spacing:-0.15px">94,388</div>
<div style="position:absolute;left:717px;top:656px;width:1px;height:21px;background:#e9eef3"></div>
<div class="t" style="left:718px;top:659px;width:213px;text-align:right;font-size:12.5px;letter-spacing:-0.15px">289,556,173.26</div>
<div style="position:absolute;left:937px;top:656px;width:1px;height:21px;background:#e9eef3"></div>
<div class="t" style="left:938px;top:659px;width:105px;text-align:right;font-size:12.5px;letter-spacing:-0.15px">1,401,568</div>
<div style="position:absolute;left:1049px;top:656px;width:1px;height:21px;background:#e9eef3"></div>
<div class="t" style="left:1050px;top:659px;width:141px;text-align:right;font-size:12.5px;letter-spacing:-0.15px">206.59</div>
<div style="position:absolute;left:79px;top:677px;width:1119px;height:21px;background:#fff"></div>
<div style="position:absolute;left:49px;top:677px;width:29px;height:21px;background:#f2f2f2"></div>
<div style="position:absolute;left:49px;top:697px;width:29px;height:1px;background:#6a6a6a"></div>
<div style="position:absolute;left:78px;top:677px;width:1px;height:21px;background:#6a6a6a"></div>
<div style="position:absolute;left:1198px;top:698px;width:359px;height:1px;background:#efefef"></div>
<div class="t" style="left:53px;top:680px;font-size:12.5px">4</div>
<div class="t" style="left:84px;top:680px;font-size:12.5px;color:#000">2022</div>
<div style="position:absolute;left:165px;top:677px;width:1px;height:21px;background:#ececec"></div>
<div class="t" style="left:171px;top:680px;font-size:12.5px;color:#000">DYB0</div>
<div style="position:absolute;left:278px;top:677px;width:1px;height:21px;background:#ececec"></div>
<div class="t" style="left:284px;top:680px;font-size:12.5px;color:#000"><span class="c">天猫</span>-<span class="c">英氏官方旗舰店</span></div>
<div style="position:absolute;left:421px;top:677px;width:1px;height:21px;background:#ececec"></div>
<div class="t" style="left:422px;top:680px;width:141px;text-align:right;font-size:12.5px;letter-spacing:-0.15px">248,802,864.8</div>
<div style="position:absolute;left:569px;top:677px;width:1px;height:21px;background:#ececec"></div>
<div class="t" style="left:570px;top:680px;width:141px;text-align:right;font-size:12.5px;letter-spacing:-0.15px">100,664.02</div>
<div style="position:absolute;left:717px;top:677px;width:1px;height:21px;background:#ececec"></div>
<div class="t" style="left:718px;top:680px;width:213px;text-align:right;font-size:12.5px;letter-spacing:-0.15px">248,903,528.82</div>
<div style="position:absolute;left:937px;top:677px;width:1px;height:21px;background:#ececec"></div>
<div class="t" style="left:938px;top:680px;width:105px;text-align:right;font-size:12.5px;letter-spacing:-0.15px">1,427,425</div>
<div style="position:absolute;left:1049px;top:677px;width:1px;height:21px;background:#ececec"></div>
<div class="t" style="left:1050px;top:680px;width:141px;text-align:right;font-size:12.5px;letter-spacing:-0.15px">174.37</div>
<div style="position:absolute;left:79px;top:698px;width:1119px;height:21px;background:#dde9f6"></div>
<div style="position:absolute;left:49px;top:698px;width:29px;height:21px;background:#f2f2f2"></div>
<div style="position:absolute;left:49px;top:718px;width:29px;height:1px;background:#6a6a6a"></div>
<div style="position:absolute;left:78px;top:698px;width:1px;height:21px;background:#6a6a6a"></div>
<div style="position:absolute;left:1198px;top:719px;width:359px;height:1px;background:#efefef"></div>
<div class="t" style="left:53px;top:701px;font-size:12.5px">5</div>
<div class="t" style="left:84px;top:701px;font-size:12.5px;color:#000">2022</div>
<div style="position:absolute;left:165px;top:698px;width:1px;height:21px;background:#e9eef3"></div>
<div class="t" style="left:171px;top:701px;font-size:12.5px;color:#000">DHE9</div>
<div style="position:absolute;left:278px;top:698px;width:1px;height:21px;background:#e9eef3"></div>
<div class="t" style="left:284px;top:701px;font-size:12.5px;color:#000"><span class="c">海澜之家抖音官方旗舰店</span></div>
<div style="position:absolute;left:421px;top:698px;width:1px;height:21px;background:#e9eef3"></div>
<div class="t" style="left:422px;top:701px;width:141px;text-align:right;font-size:12.5px;letter-spacing:-0.15px">171,569,464.49</div>
<div style="position:absolute;left:569px;top:698px;width:1px;height:21px;background:#e9eef3"></div>
<div class="t" style="left:570px;top:701px;width:141px;text-align:right;font-size:12.5px;letter-spacing:-0.15px">374</div>
<div style="position:absolute;left:717px;top:698px;width:1px;height:21px;background:#e9eef3"></div>
<div class="t" style="left:718px;top:701px;width:213px;text-align:right;font-size:12.5px;letter-spacing:-0.15px">171,569,838.49</div>
<div style="position:absolute;left:937px;top:698px;width:1px;height:21px;background:#e9eef3"></div>
<div class="t" style="left:938px;top:701px;width:105px;text-align:right;font-size:12.5px;letter-spacing:-0.15px">1,625,805</div>
<div style="position:absolute;left:1049px;top:698px;width:1px;height:21px;background:#e9eef3"></div>
<div class="t" style="left:1050px;top:701px;width:141px;text-align:right;font-size:12.5px;letter-spacing:-0.15px">105.52</div>
<div style="position:absolute;left:79px;top:719px;width:1119px;height:21px;background:#fff"></div>
<div style="position:absolute;left:49px;top:719px;width:29px;height:21px;background:#f2f2f2"></div>
<div style="position:absolute;left:49px;top:739px;width:29px;height:1px;background:#6a6a6a"></div>
<div style="position:absolute;left:78px;top:719px;width:1px;height:21px;background:#6a6a6a"></div>
<div style="position:absolute;left:1198px;top:740px;width:359px;height:1px;background:#efefef"></div>
<div class="t" style="left:53px;top:722px;font-size:12.5px">6</div>
<div class="t" style="left:84px;top:722px;font-size:12.5px;color:#000">2022</div>
<div style="position:absolute;left:165px;top:719px;width:1px;height:21px;background:#ececec"></div>
<div class="t" style="left:171px;top:722px;font-size:12.5px;color:#000">DHW8</div>
<div style="position:absolute;left:278px;top:719px;width:1px;height:21px;background:#ececec"></div>
<div class="t" style="left:284px;top:722px;font-size:12.5px;color:#000"><span class="c">海澜之家淘宝官方店</span></div>
<div style="position:absolute;left:421px;top:719px;width:1px;height:21px;background:#ececec"></div>
<div class="t" style="left:422px;top:722px;width:141px;text-align:right;font-size:12.5px;letter-spacing:-0.15px">70,951,655.54</div>
<div style="position:absolute;left:569px;top:719px;width:1px;height:21px;background:#ececec"></div>
<div class="t" style="left:570px;top:722px;width:141px;text-align:right;font-size:12.5px;letter-spacing:-0.15px">6,894.51</div>
<div style="position:absolute;left:717px;top:719px;width:1px;height:21px;background:#ececec"></div>
<div class="t" style="left:718px;top:722px;width:213px;text-align:right;font-size:12.5px;letter-spacing:-0.15px">70,958,550.05</div>
<div style="position:absolute;left:937px;top:719px;width:1px;height:21px;background:#ececec"></div>
<div class="t" style="left:938px;top:722px;width:105px;text-align:right;font-size:12.5px;letter-spacing:-0.15px">342,809</div>
<div style="position:absolute;left:1049px;top:719px;width:1px;height:21px;background:#ececec"></div>
<div class="t" style="left:1050px;top:722px;width:141px;text-align:right;font-size:12.5px;letter-spacing:-0.15px">206.99</div>
<div style="position:absolute;left:79px;top:740px;width:1119px;height:21px;background:#dde9f6"></div>
<div style="position:absolute;left:49px;top:740px;width:29px;height:21px;background:#f2f2f2"></div>
<div style="position:absolute;left:49px;top:760px;width:29px;height:1px;background:#6a6a6a"></div>
<div style="position:absolute;left:78px;top:740px;width:1px;height:21px;background:#6a6a6a"></div>
<div style="position:absolute;left:1198px;top:761px;width:359px;height:1px;background:#efefef"></div>
<div class="t" style="left:53px;top:743px;font-size:12.5px">7</div>
<div class="t" style="left:84px;top:743px;font-size:12.5px;color:#000">2022</div>
<div style="position:absolute;left:165px;top:740px;width:1px;height:21px;background:#e9eef3"></div>
<div class="t" style="left:171px;top:743px;font-size:12.5px;color:#000">DGA3</div>
<div style="position:absolute;left:278px;top:740px;width:1px;height:21px;background:#e9eef3"></div>
<div class="t" style="left:284px;top:743px;font-size:12.5px;color:#000">OVV<span class="c">天猫店</span></div>
<div style="position:absolute;left:421px;top:740px;width:1px;height:21px;background:#e9eef3"></div>
<div class="t" style="left:422px;top:743px;width:141px;text-align:right;font-size:12.5px;letter-spacing:-0.15px">70,554,716</div>
<div style="position:absolute;left:569px;top:740px;width:1px;height:21px;background:#e9eef3"></div>
<div class="t" style="left:570px;top:743px;width:141px;text-align:right;font-size:12.5px;letter-spacing:-0.15px">0</div>
<div style="position:absolute;left:717px;top:740px;width:1px;height:21px;background:#e9eef3"></div>
<div class="t" style="left:718px;top:743px;width:213px;text-align:right;font-size:12.5px;letter-spacing:-0.15px">70,554,716</div>
<div style="position:absolute;left:937px;top:740px;width:1px;height:21px;background:#e9eef3"></div>
<div class="t" style="left:938px;top:743px;width:105px;text-align:right;font-size:12.5px;letter-spacing:-0.15px">65,484</div>
<div style="position:absolute;left:1049px;top:740px;width:1px;height:21px;background:#e9eef3"></div>
<div class="t" style="left:1050px;top:743px;width:141px;text-align:right;font-size:12.5px;letter-spacing:-0.15px">1,077.43</div>
<div style="position:absolute;left:79px;top:761px;width:1119px;height:21px;background:#fff"></div>
<div style="position:absolute;left:49px;top:761px;width:29px;height:21px;background:#f2f2f2"></div>
<div style="position:absolute;left:49px;top:781px;width:29px;height:1px;background:#6a6a6a"></div>
<div style="position:absolute;left:78px;top:761px;width:1px;height:21px;background:#6a6a6a"></div>
<div style="position:absolute;left:1198px;top:782px;width:359px;height:1px;background:#efefef"></div>
<div class="t" style="left:53px;top:764px;font-size:12.5px">8</div>
<div class="t" style="left:84px;top:764px;font-size:12.5px;color:#000">2022</div>
<div style="position:absolute;left:165px;top:761px;width:1px;height:21px;background:#ececec"></div>
<div class="t" style="left:171px;top:764px;font-size:12.5px;color:#000">DH9U</div>
<div style="position:absolute;left:278px;top:761px;width:1px;height:21px;background:#ececec"></div>
<div class="t" style="left:284px;top:764px;font-size:12.5px;color:#000"><span class="c">海澜之家抖音十三号店</span></div>
<div style="position:absolute;left:421px;top:761px;width:1px;height:21px;background:#ececec"></div>
<div class="t" style="left:422px;top:764px;width:141px;text-align:right;font-size:12.5px;letter-spacing:-0.15px">55,939,888.98</div>
<div style="position:absolute;left:569px;top:761px;width:1px;height:21px;background:#ececec"></div>
<div class="t" style="left:570px;top:764px;width:141px;text-align:right;font-size:12.5px;letter-spacing:-0.15px">0</div>
<div style="position:absolute;left:717px;top:761px;width:1px;height:21px;background:#ececec"></div>
<div class="t" style="left:718px;top:764px;width:213px;text-align:right;font-size:12.5px;letter-spacing:-0.15px">55,939,888.98</div>
<div style="position:absolute;left:937px;top:761px;width:1px;height:21px;background:#ececec"></div>
<div class="t" style="left:938px;top:764px;width:105px;text-align:right;font-size:12.5px;letter-spacing:-0.15px">690,541</div>
<div style="position:absolute;left:1049px;top:761px;width:1px;height:21px;background:#ececec"></div>
<div class="t" style="left:1050px;top:764px;width:141px;text-align:right;font-size:12.5px;letter-spacing:-0.15px">81</div>
<div style="position:absolute;left:79px;top:782px;width:1119px;height:21px;background:#dde9f6"></div>
<div style="position:absolute;left:49px;top:782px;width:29px;height:21px;background:#f2f2f2"></div>
<div style="position:absolute;left:78px;top:782px;width:1px;height:21px;background:#6a6a6a"></div>
<div style="position:absolute;left:1198px;top:803px;width:359px;height:1px;background:#efefef"></div>
<div class="t" style="left:53px;top:785px;font-size:12.5px">9</div>
<div class="t" style="left:84px;top:785px;font-size:12.5px;color:#000">2022</div>
<div style="position:absolute;left:165px;top:782px;width:1px;height:21px;background:#e9eef3"></div>
<div class="t" style="left:171px;top:785px;font-size:12.5px;color:#000">DH4X</div>
<div style="position:absolute;left:278px;top:782px;width:1px;height:21px;background:#e9eef3"></div>
<div class="t" style="left:284px;top:785px;font-size:12.5px;color:#000"><span class="c">海澜之家抖音十八号店</span></div>
<div style="position:absolute;left:421px;top:782px;width:1px;height:21px;background:#e9eef3"></div>
<div class="t" style="left:422px;top:785px;width:141px;text-align:right;font-size:12.5px;letter-spacing:-0.15px">49,979,031.28</div>
<div style="position:absolute;left:569px;top:782px;width:1px;height:21px;background:#e9eef3"></div>
<div class="t" style="left:570px;top:785px;width:141px;text-align:right;font-size:12.5px;letter-spacing:-0.15px">0</div>
<div style="position:absolute;left:717px;top:782px;width:1px;height:21px;background:#e9eef3"></div>
<div class="t" style="left:718px;top:785px;width:213px;text-align:right;font-size:12.5px;letter-spacing:-0.15px">49,979,031.28</div>
<div style="position:absolute;left:937px;top:782px;width:1px;height:21px;background:#e9eef3"></div>
<div class="t" style="left:938px;top:785px;width:105px;text-align:right;font-size:12.5px;letter-spacing:-0.15px">463,394</div>
<div style="position:absolute;left:1049px;top:782px;width:1px;height:21px;background:#e9eef3"></div>
<div class="t" style="left:1050px;top:785px;width:141px;text-align:right;font-size:12.5px;letter-spacing:-0.15px">107.85</div>
<div style="position:absolute;left:1197px;top:614px;width:1px;height:189px;background:#ececec"></div>
<div style="position:absolute;left:79px;top:614px;width:87px;height:21px;background:#6aaae4;border:2px solid #1a1a1a"></div>
<div class="t" style="left:84px;top:617px;font-size:12.5px;color:#fff">2022</div>
<div style="position:absolute;left:1557px;top:586px;width:16px;height:216px;background:#f5f5f5"></div>
<div style="position:absolute;left:1558px;top:604px;width:14px;height:17px;background:#c9cdc9"></div>
<div class="t" style="left:79px;top:809px;font-size:13px"><span class="c">刷新</span></div>
<div class="t" style="left:166px;top:809px;font-size:13px;color:#9a9a9a"><span class="c">保存</span></div>
<div class="t" style="left:239px;top:809px;font-size:13px;color:#9a9a9a"><span class="c">取消</span></div>
<div class="t" style="left:536px;top:809px;font-size:13px"><span class="c">导出数据</span>...</div>
<div style="position:absolute;left:654px;top:806px;width:53px;height:22px;background:#fff;border:1px solid #8f8f8f"></div>
<div class="t" style="left:658px;top:809px;font-size:13px">200</div>
<div class="t" style="left:736px;top:809px;font-size:13px">2,660</div>
<div class="t" style="left:822px;top:809px;font-size:12.8px">200 <span class="c">行已获取</span> - 8.597s (4ms <span class="c">获取</span>), 2025-10-21 20:30:18</div>
<div style="position:absolute;left:778px;top:834px;width:1px;height:25px;background:#c8c8c8"></div>
<div style="position:absolute;left:814px;top:834px;width:1px;height:25px;background:#c8c8c8"></div>
<div style="position:absolute;left:841px;top:834px;width:1px;height:25px;background:#c8c8c8"></div>
<div style="position:absolute;left:975px;top:834px;width:1px;height:25px;background:#c8c8c8"></div>
<div style="position:absolute;left:1103px;top:834px;width:1px;height:25px;background:#c8c8c8"></div>
<div style="position:absolute;left:1231px;top:834px;width:1px;height:25px;background:#c8c8c8"></div>
<div class="t" style="left:786px;top:837px;font-size:13px">CST</div>
<div class="t" style="left:822px;top:837px;font-size:13px">zh</div>
<div class="t" style="left:849px;top:837px;font-size:13px"><span class="c">可写</span></div>
<div class="t" style="left:983px;top:837px;font-size:13px"><span class="c">智能插入</span></div>
<div class="t" style="left:1111px;top:837px;font-size:13px">112 : 1 : 4246</div>
<div class="t" style="left:1239px;top:837px;font-size:13px">Sel: 0 | 0</div>
<div style="position:absolute;left:0px;top:860px;width:1600px;height:40px;background:#000"></div>
<div style="position:absolute;left:294px;top:860px;width:48px;height:40px;background:#333"></div>
<div style="position:absolute;left:294px;top:898px;width:48px;height:2px;background:#76b9ed"></div>
<div class="t" style="left:1495px;top:863px;font-size:13px;color:#fff">20:30</div>
<div style="position:absolute;left:1596px;top:860px;width:1px;height:40px;background:#5a5a5a"></div>
<div class="t" style="left:1477px;top:882px;font-size:13px;color:#fff">2025/10/21</div>
<div class="t" style="left:1442px;top:871px;font-size:13px;color:#fff">ENG</div>
<svg style="left:30px;top:539px;" width="12" height="14" viewBox="0 0 12 14"><rect x="0.6" y="0.6" width="10.8" height="12.8" fill="#fff" stroke="#1a8ad6" stroke-width="1.2"/><path d="M0.6 4H11.4M0.6 7H11.4M0.6 10H11.4M4 0.6V13.4M7.5 0.6V13.4" stroke="#1a8ad6" stroke-width="1.2"/><rect x="0" y="0" width="12" height="3" fill="#1a8ad6"/></svg>
<svg style="left:119px;top:541px;" width="11" height="11" viewBox="0 0 11 11"><path d="M0.5 0.5L10.5 10.5M10.5 0.5L0.5 10.5" stroke="#222" stroke-width="1.1"/></svg>
<svg style="left:31px;top:566px;" width="16" height="11" viewBox="0 0 16 11"><path d="M3.5 3L1 5.5L3.5 8M5 3L7.5 5.5L5 8" fill="none" stroke="#1a8ad6" stroke-width="1.3"/><path d="M6.5 1.5V0.5H15V1.5M10.8 0.5V10.5M9.3 10.5H12.3" fill="none" stroke="#1a8ad6" stroke-width="1.2"/></svg>
<svg style="left:423px;top:563px;" width="16" height="16" viewBox="0 0 16 16"><path d="M1 1H5M1 1V5M1 1L5.5 5.5M15 1H11M15 1V5M15 1L10.5 5.5M1 15H5M1 15V11M1 15L5.5 10.5M15 15H11M15 15V11M15 15L10.5 10.5" fill="none" stroke="#555" stroke-width="1.5"/></svg>
<svg style="left:1383px;top:563px;" width="11" height="16" viewBox="0 0 11 16"><path d="M2 3L8.5 8L2 13Z" fill="#8a8f8a"/></svg>
<div style="position:absolute;left:1402px;top:563px;width:1px;height:16px;background:#8a8a8a"></div>
<svg style="left:1407px;top:568px;" width="8" height="5" viewBox="0 0 8 5"><path d="M0 0H8L4 4.5Z" fill="#6a6a6a"/></svg>
<svg style="left:1433px;top:563px;" width="16" height="16" viewBox="0 0 16 16"><path d="M8 2L14 8L8 14L2 8Z" fill="none" stroke="#a8a8a8" stroke-width="1.8" transform="rotate(0)"/><path d="M5 11L10 6" stroke="#a8a8a8" stroke-width="2"/><path d="M11 15H15" stroke="#888" stroke-width="1"/></svg>
<svg style="left:1455px;top:562px;" width="16" height="16" viewBox="0 0 16 16"><path d="M0.5 1H12L8 6V12L5 13V6Z" fill="none" stroke="#a8a8a8" stroke-width="1.2"/><rect x="11" y="11" width="4.5" height="4.5" fill="none" stroke="#a8a8a8"/></svg>
<svg style="left:1479px;top:562px;" width="14" height="16" viewBox="0 0 14 16"><path d="M0.5 1H13L8.5 6.5V15L5 12V6.5Z" fill="#3db6f0" stroke="#1a8ad6" stroke-width="1"/></svg>
<div style="position:absolute;left:1499px;top:562px;width:2px;height:2px;background:#b8ae98"></div><div style="position:absolute;left:1499px;top:566px;width:2px;height:2px;background:#b8ae98"></div><div style="position:absolute;left:1499px;top:570px;width:2px;height:2px;background:#b8ae98"></div><div style="position:absolute;left:1499px;top:574px;width:2px;height:2px;background:#b8ae98"></div>
<svg style="left:1510px;top:565px;" width="17" height="11" viewBox="0 0 17 11"><path d="M6 0.5L1 5.5L6 10.5V7.5H16V3.5H6Z" fill="#8f8f8f"/></svg>
<svg style="left:1533px;top:568px;" width="8" height="5" viewBox="0 0 8 5"><path d="M0 0H8L4 4.5Z" fill="#7a7a7a"/></svg>
<svg style="left:1550px;top:565px;" width="17" height="11" viewBox="0 0 17 11"><path d="M11 0.5L16 5.5L11 10.5V7.5H1V3.5H11Z" fill="#8f8f8f"/></svg>
<svg style="left:1573px;top:568px;" width="8" height="5" viewBox="0 0 8 5"><path d="M0 0H8L4 4.5Z" fill="#7a7a7a"/></svg>
<div style="position:absolute;left:26px;top:586px;width:21px;height:61px;background:#e6e8e6;border:1px solid #bdbdbd"></div>
<div class="t" style="left:24px;top:601px;font-size:13px;transform:rotate(-90deg);transform-origin:13px 8px">网格</div>
<svg style="left:30px;top:625px;" width="14" height="15" viewBox="0 0 14 15"><rect x="0.6" y="0.6" width="12.8" height="13.8" fill="#fff" stroke="#1a8ad6" stroke-width="1.2"/><path d="M0.6 4H13.4M0.6 7.5H13.4M0.6 11H13.4M4.6 0.6V14.4M9 0.6V14.4" stroke="#1a8ad6" stroke-width="1.2"/></svg>
<div class="t" style="left:24px;top:665px;font-size:13px;transform:rotate(-90deg);transform-origin:13px 8px">文本</div>
<svg style="left:30px;top:686px;" width="12" height="16" viewBox="0 0 12 16"><path d="M1 1.5V9.5M1 1.5H2.5M1 9.5H2.5M1 5.5H11M11 3V8" fill="none" stroke="#1a8ad6" stroke-width="1.3"/><path d="M5.5 11L7.5 9L9.5 11M5.5 13L7.5 15L9.5 13" fill="none" stroke="#1a8ad6" stroke-width="1.2"/></svg>
<div class="t" style="left:24px;top:756px;font-size:13px;transform:rotate(-90deg);transform-origin:13px 8px">记录</div>
<svg style="left:29px;top:779px;" width="15" height="14" viewBox="0 0 15 14"><path d="M0.7 4.5V13.3H11.5V9 M0.7 4.5H5" fill="none" stroke="#1a8ad6" stroke-width="1.3"/><circle cx="11" cy="4" r="3.6" fill="#1a8ad6"/><rect x="10.4" y="1.8" width="1.2" height="4.4" fill="#fff"/></svg>
<svg style="left:55px;top:592px;" width="7" height="8" viewBox="0 0 7 8"><rect x="0" y="3" width="7" height="5" rx="1" fill="#f5b800"/><path d="M1.7 3.5V2.5Q1.7 0.6 3.5 0.6Q5.3 0.6 5.3 2.5V3.5" fill="none" stroke="#f5b800" stroke-width="1.2"/></svg>
<svg style="left:1561px;top:592px;" width="10" height="6" viewBox="0 0 10 6"><path d="M1 5L5 1L9 5" fill="none" stroke="#444" stroke-width="2"/></svg>
<svg style="left:1561px;top:790px;" width="10" height="6" viewBox="0 0 10 6"><path d="M1 1L5 5L9 1" fill="none" stroke="#444" stroke-width="2"/></svg>
<svg style="left:1578px;top:595px;" width="16" height="14" viewBox="0 0 16 14"><rect x="0.6" y="0.6" width="14.8" height="12.8" fill="#fff" stroke="#1a8ad6" stroke-width="1.2"/><rect x="7" y="0" width="9" height="9" fill="#2aa6e8"/><circle cx="3" cy="11" r="2.3" fill="#1a8ad6"/></svg>
<div class="t" style="left:1577px;top:614px;font-size:13px;transform:rotate(90deg);transform-origin:8px 8px">面板</div>
<svg style="left:1578px;top:654px;" width="15" height="14" viewBox="0 0 15 14"><rect x="0.6" y="0.6" width="13.8" height="12.8" fill="#bfe3f7" stroke="#1a8ad6" stroke-width="1.2"/><path d="M2 5H13M2 8H13M4 3V11M7 3V11M10 3V11" stroke="#fff" stroke-width="1" stroke-dasharray="1 1"/><rect x="0" y="0" width="15" height="3" fill="#1a8ad6"/></svg>
<svg style="left:1578px;top:675px;" width="15" height="15" viewBox="0 0 15 15"><circle cx="7.5" cy="7.5" r="6.7" fill="none" stroke="#1a8ad6" stroke-width="1.4"/><circle cx="5.5" cy="5.5" r="1.1" fill="#1a8ad6"/><circle cx="9.5" cy="5.5" r="1.1" fill="#1a8ad6"/><circle cx="5.5" cy="9.5" r="1.1" fill="#1a8ad6"/><circle cx="9.5" cy="9.5" r="1.1" fill="#1a8ad6"/></svg>
<svg style="left:1578px;top:697px;" width="15" height="15" viewBox="0 0 15 15"><rect x="0.6" y="4.6" width="13.8" height="9.8" fill="#fff" stroke="#1a8ad6" stroke-width="1.2"/><path d="M0.6 8H14.4M0.6 11H14.4M5 4.6V14.4M10 4.6V14.4" stroke="#1a8ad6" stroke-width="1"/><path d="M6 1V14" stroke="#f68a12" stroke-width="2"/><path d="M4.5 2H7.5" stroke="#f68a12" stroke-width="1"/></svg>
<svg style="left:1578px;top:718px;" width="15" height="15" viewBox="0 0 15 15"><rect x="0.6" y="0.6" width="13.8" height="13.8" fill="#fff" stroke="#1a8ad6" stroke-width="1.2"/><rect x="0" y="0" width="15" height="3" fill="#1a8ad6"/><rect x="1.5" y="4" width="8" height="5" fill="#4fb7ef"/><path d="M9 11.5H14M9 10V13M14 10V13" stroke="#1a8ad6" stroke-width="1"/></svg>
<svg style="left:1578px;top:740px;" width="15" height="15" viewBox="0 0 15 15"><circle cx="3.5" cy="3.5" r="3" fill="#1a8ad6"/><circle cx="11.5" cy="3.5" r="3" fill="#1a8ad6"/><circle cx="3.5" cy="11.5" r="3" fill="#1a8ad6"/><circle cx="11.5" cy="11.5" r="3" fill="#f68a12"/><path d="M2 3.5H5M10 3.5H13M11.5 2V5M2 10L5 13M5 10L2 13M10 11H13M10 12.5H13" stroke="#fff" stroke-width="0.9"/></svg>
<svg style="left:1577px;top:815px;" width="17" height="15" viewBox="0 0 17 15"><rect x="1" y="1" width="5" height="14" rx="1.5" fill="#1a8ad6"/><path d="M8 13H15" stroke="#1a8ad6" stroke-width="2"/><path d="M9 6Q11 2 14 4L15 8" fill="none" stroke="#1a8ad6" stroke-width="1.6"/><path d="M7.5 4.5L10.5 3L10 7Z" fill="#1a8ad6"/></svg>
<svg style="left:60px;top:810px;" width="15" height="15" viewBox="0 0 15 15"><path d="M3 6Q4 2 8 2L11 3.5M12 9Q11 13 7 13L4 11.5" fill="none" stroke="#1a8ad6" stroke-width="2"/><path d="M9.5 0.5L13.5 3.5L9 5.5Z M5.5 9.5L1.5 11.5L6 14.5Z" fill="#1a8ad6"/><path d="M1 6L4 8L1 10" fill="none" stroke="#1a8ad6" stroke-width="1.4"/><path d="M14 5L11 7L14 9" fill="none" stroke="#1a8ad6" stroke-width="1.4"/></svg>
<svg style="left:117px;top:816px;" width="8" height="5" viewBox="0 0 8 5"><path d="M0 0H8L4 4.5Z" fill="#222"/></svg>
<div style="position:absolute;left:135px;top:810px;width:2px;height:2px;background:#b8ae98"></div><div style="position:absolute;left:135px;top:814px;width:2px;height:2px;background:#b8ae98"></div><div style="position:absolute;left:135px;top:818px;width:2px;height:2px;background:#b8ae98"></div><div style="position:absolute;left:135px;top:822px;width:2px;height:2px;background:#b8ae98"></div>
<svg style="left:146px;top:810px;" width="14" height="14" viewBox="0 0 14 14"><circle cx="7" cy="7" r="6.3" fill="none" stroke="#a8a8a8" stroke-width="1.2"/><path d="M4 7L6.3 9.3L10.3 4.8" fill="none" stroke="#a8a8a8" stroke-width="1.2"/></svg>
<svg style="left:203px;top:816px;" width="8" height="5" viewBox="0 0 8 5"><path d="M0 0H8L4 4.5Z" fill="#7a7a7a"/></svg>
<svg style="left:220px;top:810px;" width="13" height="13" viewBox="0 0 13 13"><rect x="0.6" y="0.6" width="11.8" height="11.8" fill="none" stroke="#a8a8a8" stroke-width="1.2"/><path d="M3 3L10 10M10 3L3 10" stroke="#a8a8a8" stroke-width="1"/></svg>
<div style="position:absolute;left:273px;top:806px;width:1px;height:25px;background:#7a7a7a"></div>
<svg style="left:283px;top:810px;" width="16" height="14" viewBox="0 0 16 14"><path d="M0 1H14M0 6H9M0 11H5" stroke="#1a8ad6" stroke-width="1.7"/><path d="M7 13.5L14 7" stroke="#1a8ad6" stroke-width="1.8"/></svg>
<svg style="left:308px;top:810px;" width="16" height="14" viewBox="0 0 16 14"><path d="M0 1H14M0 6H6M0 11H6M8 10H15M11.5 6.5V14" stroke="#999" stroke-width="1.8"/></svg>
<svg style="left:332px;top:810px;" width="16" height="14" viewBox="0 0 16 14"><path d="M0 1H14M0 6H2M0 11H2" stroke="#999" stroke-width="1.8"/><path d="M6 5Q4.5 8.5 6 12M13 5Q14.5 8.5 13 12M9.5 6.5V11M7.3 8.8H11.7" fill="none" stroke="#999" stroke-width="1.2"/></svg>
<svg style="left:355px;top:810px;" width="16" height="14" viewBox="0 0 16 14"><path d="M0 1H14M0 6H6M0 11H6M8 10H15" stroke="#999" stroke-width="1.8"/></svg>
<div style="position:absolute;left:380px;top:810px;width:2px;height:2px;background:#b8ae98"></div><div style="position:absolute;left:380px;top:814px;width:2px;height:2px;background:#b8ae98"></div><div style="position:absolute;left:380px;top:818px;width:2px;height:2px;background:#b8ae98"></div><div style="position:absolute;left:380px;top:822px;width:2px;height:2px;background:#b8ae98"></div>
<svg style="left:387px;top:810px;" width="13" height="14" viewBox="0 0 13 14"><path d="M1 0V14" stroke="#999" stroke-width="1.8"/><path d="M11 1L5 7L11 13" fill="none" stroke="#999" stroke-width="1.8"/></svg>
<svg style="left:413px;top:810px;" width="8" height="14" viewBox="0 0 8 14"><path d="M7 1L1.5 7L7 13" fill="none" stroke="#999" stroke-width="1.8"/></svg>
<svg style="left:438px;top:810px;" width="8" height="14" viewBox="0 0 8 14"><path d="M1 1L6.5 7L1 13" fill="none" stroke="#1a8ad6" stroke-width="1.8"/></svg>
<svg style="left:458px;top:810px;" width="12" height="14" viewBox="0 0 12 14"><path d="M1 1L6.5 7L1 13" fill="none" stroke="#1a8ad6" stroke-width="1.8"/><path d="M11 0V14" stroke="#1a8ad6" stroke-width="1.8"/></svg>
<svg style="left:479px;top:810px;" width="15" height="15" viewBox="0 0 15 15"><path d="M0.7 4V0.7H4M11 0.7H14.3V4M0.7 11V14.3H4M11 14.3H14.3V11" fill="none" stroke="#1a8ad6" stroke-width="1.2"/><path d="M4.5 3.5H8.5L10.5 5.5V11.5H4.5Z" fill="#5ec8f2" stroke="#1a8ad6" stroke-width="0.8"/></svg>
<div style="position:absolute;left:503px;top:810px;width:2px;height:2px;background:#b8ae98"></div><div style="position:absolute;left:503px;top:814px;width:2px;height:2px;background:#b8ae98"></div><div style="position:absolute;left:503px;top:818px;width:2px;height:2px;background:#b8ae98"></div><div style="position:absolute;left:503px;top:822px;width:2px;height:2px;background:#b8ae98"></div>
<svg style="left:518px;top:810px;" width="13" height="14" viewBox="0 0 13 14"><path d="M6.5 1V10M2.5 5L6.5 1L10.5 5" fill="none" stroke="#1a8ad6" stroke-width="1.8"/><path d="M0.8 8V13.2H12.2V8" fill="none" stroke="#1a8ad6" stroke-width="1.3"/></svg>
<svg style="left:608px;top:816px;" width="8" height="5" viewBox="0 0 8 5"><path d="M0 0H8L4 4.5Z" fill="#222"/></svg>
<div style="position:absolute;left:625px;top:810px;width:2px;height:2px;background:#b8ae98"></div><div style="position:absolute;left:625px;top:814px;width:2px;height:2px;background:#b8ae98"></div><div style="position:absolute;left:625px;top:818px;width:2px;height:2px;background:#b8ae98"></div><div style="position:absolute;left:625px;top:822px;width:2px;height:2px;background:#b8ae98"></div>
<svg style="left:632px;top:810px;" width="15" height="15" viewBox="0 0 15 15"><path d="M6 0H9L9.5 2.2L11.3 3L13.2 1.8L15 4L13.7 5.8L14 7.5L15 9.5L13.3 11.5L11.4 10.8L9.6 12.6L9 15H6L5.6 12.8L3.7 11.9L1.8 13L0 11L1.2 9.2L1 7.5L0 5.5L1.8 3.5L3.6 4.2L5.4 2.4Z" fill="#1a8ad6"/><circle cx="7.5" cy="7.5" r="2.6" fill="#7fd0f4"/></svg>
<svg style="left:715px;top:810px;" width="15" height="14" viewBox="0 0 15 14"><path d="M2 1L7.5 6L13 1M7.5 6V10M5 7.5L7.5 10L10 7.5" fill="none" stroke="#1a8ad6" stroke-width="1.4"/><path d="M0.7 9V13.3H14.3V9" fill="none" stroke="#1a8ad6" stroke-width="1.3"/></svg>
<div style="position:absolute;left:776px;top:810px;width:2px;height:2px;background:#b8ae98"></div><div style="position:absolute;left:776px;top:814px;width:2px;height:2px;background:#b8ae98"></div><div style="position:absolute;left:776px;top:818px;width:2px;height:2px;background:#b8ae98"></div><div style="position:absolute;left:776px;top:822px;width:2px;height:2px;background:#b8ae98"></div>
<div class="t" style="left:802px;top:808px;font-size:10px;color:#6a7ab0">···</div>
<div style="position:absolute;left:1315px;top:838px;width:2px;height:2px;background:#b8ae98"></div><div style="position:absolute;left:1315px;top:842px;width:2px;height:2px;background:#b8ae98"></div><div style="position:absolute;left:1315px;top:846px;width:2px;height:2px;background:#b8ae98"></div><div style="position:absolute;left:1315px;top:850px;width:2px;height:2px;background:#b8ae98"></div>
<svg style="left:16px;top:872px;" width="16" height="16" viewBox="0 0 16 16"><path d="M0 2.2L6.6 1.3V7.6H0Z M7.4 1.2L16 0V7.6H7.4Z M0 8.4H6.6V14.7L0 13.8Z M7.4 8.4H16V16L7.4 14.8Z" fill="#fff"/></svg>
<svg style="left:64px;top:872px;" width="17" height="17" viewBox="0 0 17 17"><circle cx="10.5" cy="6.5" r="5.5" fill="none" stroke="#fff" stroke-width="1.4"/><path d="M6.5 10.5L0.8 16.2" stroke="#fff" stroke-width="1.6"/></svg>
<svg style="left:112px;top:872px;" width="17" height="16" viewBox="0 0 17 16"><path d="M0.7 2.5H9.5V13.5H0.7Z" fill="none" stroke="#fff" stroke-width="1.3"/><path d="M0 0.7H10M0 15.3H10M13 0V4M13 6V10M13 12V16" stroke="#fff" stroke-width="1.3"/><rect x="11.5" y="4.5" width="3" height="2" fill="#fff"/></svg>
<svg style="left:159px;top:867px;" width="25" height="25" viewBox="0 0 25 25"><path d="M5.5 13.5H20.5A8 8 0 1 0 18 19.5" fill="none" stroke="#3db4f2" stroke-width="4.2"/><path d="M7 11.5H18" stroke="#9fe4ff" stroke-width="1"/><path d="M3 22Q-1 20 5 12Q12 4 19 2Q24 1 22 5" fill="none" stroke="#e8b820" stroke-width="1.6"/></svg>
<svg style="left:209px;top:870px;" width="22" height="19" viewBox="0 0 22 19"><path d="M0 1.5H8L9.5 3H22V19H0Z" fill="#f0c850"/><path d="M0 4.5H22V19H0Z" fill="#fde7a0"/><rect x="1" y="2" width="6" height="1.5" fill="#fff"/><path d="M5.5 19V13Q5.5 11 7.5 11H14.5Q16.5 11 16.5 13V19H13.5V14.5H8.5V19Z" fill="#2f9be8"/></svg>
<svg style="left:257px;top:868px;" width="24" height="24" viewBox="0 0 24 24"><circle cx="12" cy="12" r="10.8" fill="#fff" stroke="#45b3b0" stroke-width="2.2"/><path d="M4.5 14Q5 8 10 6.5Q15 5.5 19 8.5" fill="none" stroke="#3b2a20" stroke-width="1"/><ellipse cx="17.8" cy="9.6" rx="1.7" ry="1.2" fill="#2a1d15"/><path d="M7 21.5Q7.5 16 10.5 14Q13 16.5 15.5 16Q16.5 13.5 17.5 12.5Q19 17 16.5 22Z" fill="#3b2a20"/><path d="M5 14Q5.5 17 7.5 17" fill="none" stroke="#3b2a20" stroke-width="1.2"/><path d="M7 10Q6 11 7 12" stroke="#3b2a20" fill="none" stroke-width="0.8"/></svg>
<svg style="left:306px;top:868px;" width="24" height="24" viewBox="0 0 24 24"><circle cx="12" cy="12" r="10.8" fill="#fff" stroke="#45b3b0" stroke-width="2.2"/><path d="M4.5 14Q5 8 10 6.5Q15 5.5 19 8.5" fill="none" stroke="#3b2a20" stroke-width="1"/><ellipse cx="17.8" cy="9.6" rx="1.7" ry="1.2" fill="#2a1d15"/><path d="M7 21.5Q7.5 16 10.5 14Q13 16.5 15.5 16Q16.5 13.5 17.5 12.5Q19 17 16.5 22Z" fill="#3b2a20"/><path d="M5 14Q5.5 17 7.5 17" fill="none" stroke="#3b2a20" stroke-width="1.2"/><path d="M7 10Q6 11 7 12" stroke="#3b2a20" fill="none" stroke-width="0.8"/></svg>
<svg style="left:1348px;top:874px;" width="13" height="9" viewBox="0 0 13 9"><path d="M1 8L6.5 1.5L12 8" fill="none" stroke="#fff" stroke-width="1.3"/></svg>
<svg style="left:1373px;top:870px;" width="12" height="19" viewBox="0 0 12 19"><rect x="2.5" y="0.5" width="6" height="5" fill="none" stroke="#fff"/><rect x="0.5" y="5.5" width="9" height="13" rx="1" fill="none" stroke="#fff"/><path d="M7 17L9 19L12 15" fill="none" stroke="#fff"/></svg>
<svg style="left:1394px;top:872px;" width="17" height="15" viewBox="0 0 17 15"><rect x="3.5" y="1.5" width="13" height="9" fill="none" stroke="#fff"/><path d="M10 10.5V13M6 14.5H14" stroke="#fff"/><rect x="0.5" y="0.5" width="4" height="3" fill="#000" stroke="#fff"/></svg>
<svg style="left:1418px;top:872px;" width="17" height="15" viewBox="0 0 17 15"><path d="M0.5 5H4L8 1V14L4 10H0.5Z" fill="none" stroke="#fff"/><path d="M10 5Q11.5 7.5 10 10M12 3Q14.5 7.5 12 12M14 1Q17.5 7.5 14 14" fill="none" stroke="#fff" stroke-width="1"/></svg>
<svg style="left:1559px;top:871px;" width="22" height="22" viewBox="0 0 22 22"><path d="M0.5 0.5H16.5V11.5H6L2.5 15V11.5H0.5Z" fill="#fff"/><path d="M3 3.5H14M3 6H14M3 8.5H10" stroke="#000" stroke-width="1"/><circle cx="16" cy="16.5" r="6.3" fill="#262626" stroke="#5a5a5a" stroke-width="1"/><text x="16" y="20.5" font-size="11" text-anchor="middle" fill="#fff" font-family="Liberation Sans" font-weight="bold">1</text></svg>
<div class="wm" style="left:8px;top:132px">audit审计01(Audit1)<br>audit-172.18.210.237</div>
<div class="wm" style="left:308px;top:132px">audit审计01(Audit1)<br>audit-172.18.210.237</div>
<div class="wm" style="left:608px;top:132px">audit审计01(Audit1)<br>audit-172.18.210.237</div>
<div class="wm" style="left:908px;top:132px">audit审计01(Audit1)<br>audit-172.18.210.237</div>
<div class="wm" style="left:1208px;top:132px">audit审计01(Audit1)<br>audit-172.18.210.237</div>
<div class="wm" style="left:1508px;top:132px">audit审计01(Audit1)<br>audit-172.18.210.237</div>
<div class="wm" style="left:8px;top:432px">audit审计01(Audit1)<br>audit-172.18.210.237</div>
<div class="wm" style="left:308px;top:432px">audit审计01(Audit1)<br>audit-172.18.210.237</div>
<div class="wm" style="left:608px;top:432px">audit审计01(Audit1)<br>audit-172.18.210.237</div>
<div class="wm" style="left:908px;top:432px">audit审计01(Audit1)<br>audit-172.18.210.237</div>
<div class="wm" style="left:1208px;top:432px">audit审计01(Audit1)<br>audit-172.18.210.237</div>
<div class="wm" style="left:1508px;top:432px">audit审计01(Audit1)<br>audit-172.18.210.237</div>
<div class="wm" style="left:8px;top:732px">audit审计01(Audit1)<br>audit-172.18.210.237</div>
<div class="wm" style="left:308px;top:732px">audit审计01(Audit1)<br>audit-172.18.210.237</div>
<div class="wm" style="left:608px;top:732px">audit审计01(Audit1)<br>audit-172.18.210.237</div>
<div class="wm" style="left:908px;top:732px">audit审计01(Audit1)<br>audit-172.18.210.237</div>
<div class="wm" style="left:1208px;top:732px">audit审计01(Audit1)<br>audit-172.18.210.237</div>
<div class="wm" style="left:1508px;top:732px">audit审计01(Audit1)<br>audit-172.18.210.237</div>
</body></html>
